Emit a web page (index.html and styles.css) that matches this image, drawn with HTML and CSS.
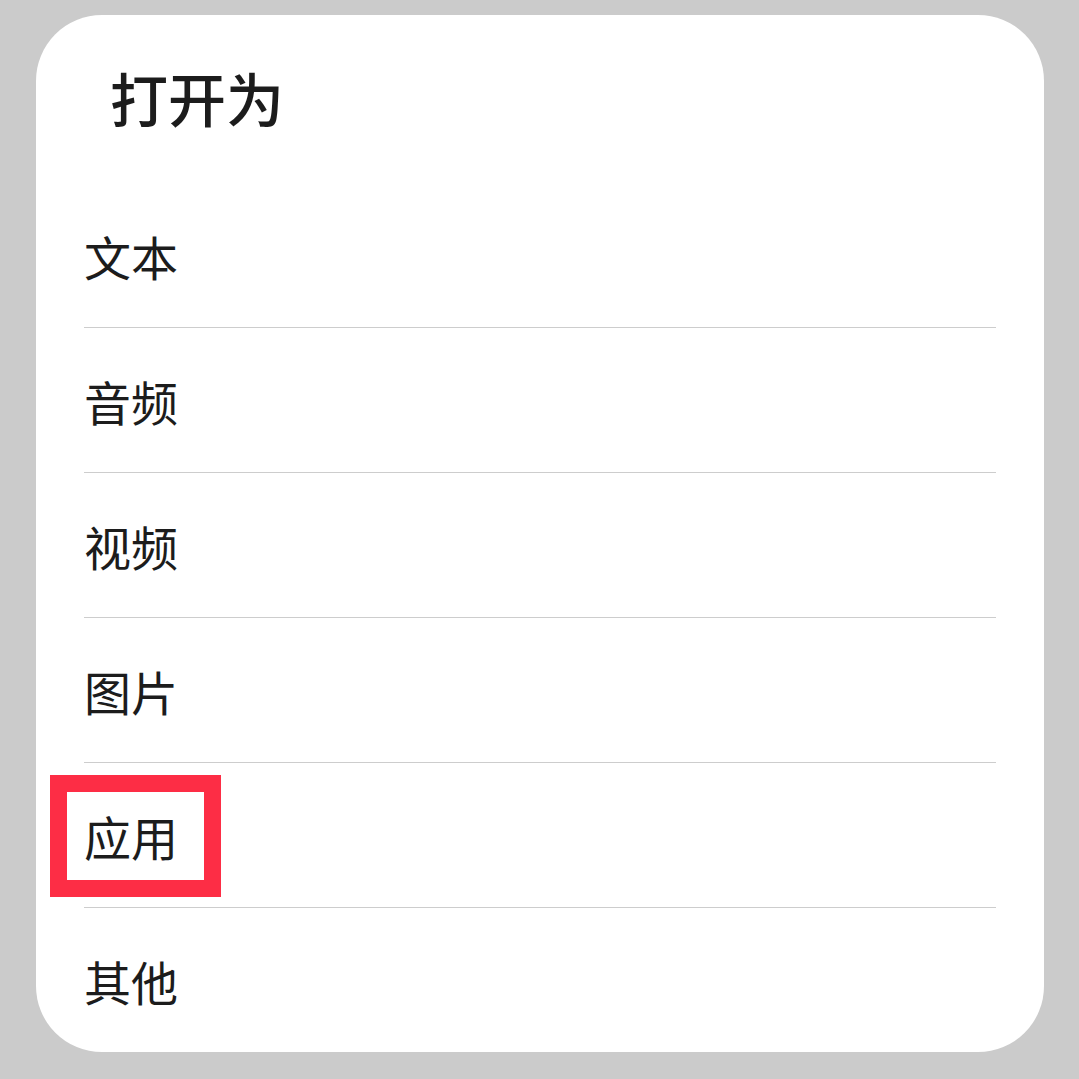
FILE: index.html
```html
<!DOCTYPE html>
<html lang="zh-CN">
<head>
    <meta charset="UTF-8">
    <title>打开为</title>
    <link rel="stylesheet" href="styles.css">
</head>
<body>
    <div class="dialog">
        <div class="dialog-title">打开为</div>
        <div class="option-list">
            <div class="option">文本</div>
            <div class="option">音频</div>
            <div class="option">视频</div>
            <div class="option">图片</div>
            <div class="option option-marked">应用<span class="mark"></span></div>
            <div class="option">其他</div>
        </div>
    </div>
</body>
</html>
```

FILE: styles.css
```css
body {
    margin: 0;
    background-color: #cbcbcb;
    font-family: "Noto Sans CJK SC", "Noto Sans", sans-serif;
    color: #1c1c1c;
}

.dialog {
    width: 1008px;
    height: 1037px;
    margin: 15px 0 0 36px;
    background: #fff;
    border-radius: 66px;
    overflow: hidden;
}

.dialog-title {
    height: 163px;
    padding: 0 0 5px 74px;
    display: flex;
    align-items: center;
    font-size: 58px;
    font-weight: 500;
}

.option {
    height: 144px;
    margin: 0 48px;
    display: flex;
    align-items: center;
    font-size: 47px;
    border-bottom: 1px solid #cdcdcd;
}

.option:last-child {
    border-bottom: none;
}

.option-marked {
    position: relative;
}

.mark {
    position: absolute;
    left: -34px;
    top: 12px;
    width: 137px;
    height: 88px;
    border: 17px solid #fd2d45;
}
```
